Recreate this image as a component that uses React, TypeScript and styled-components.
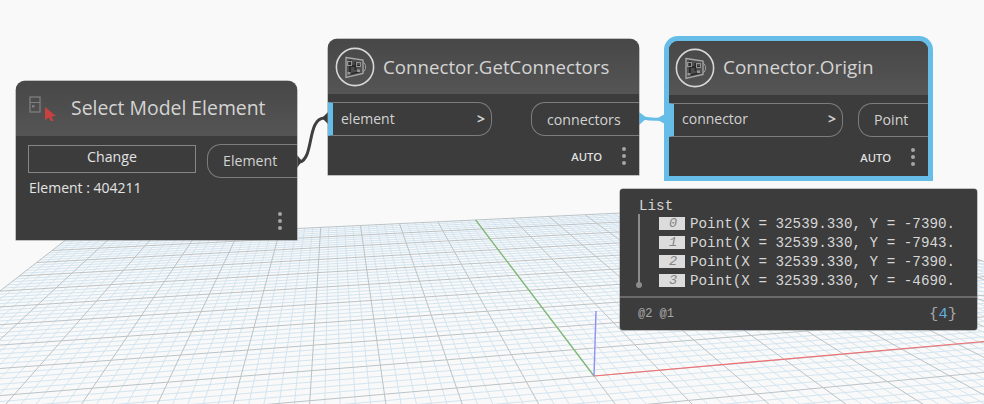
import React, { useMemo } from 'react';
import styled, { createGlobalStyle } from 'styled-components';

const GlobalStyle = createGlobalStyle`
  html, body {
    margin: 0;
    padding: 0;
    background: #f9f9f9;
    overflow: hidden;
  }
`;

const Canvas = styled.div`
  position: relative;
  width: 984px;
  height: 404px;
  overflow: hidden;
  background: #f9f9f9;
  font-family: "Open Sans", "Noto Sans", sans-serif;
`;

const Drawing = styled.svg`
  position: absolute;
  left: 0;
  top: 0;
`;

const Node = styled.div<{ $x: number; $y: number; $w: number; $h: number; $selected?: boolean }>`
  position: absolute;
  left: ${(p) => p.$x}px;
  top: ${(p) => p.$y}px;
  width: ${(p) => p.$w}px;
  height: ${(p) => p.$h}px;
  display: flex;
  flex-direction: column;
  background: #3c3c3c;
  border-radius: 9px 9px 0 0;
  overflow: hidden;
  box-shadow: ${(p) => (p.$selected ? '0 0 0 5px #66bde8' : '0 0 0 0.5px #8a8a8a')};
`;

const Header = styled.div<{ $h: number; $gap: number; $pad: number }>`
  flex: none;
  height: ${(p) => p.$h}px;
  display: flex;
  align-items: center;
  gap: ${(p) => p.$gap}px;
  padding-left: ${(p) => p.$pad}px;
  background: linear-gradient(#474747, #555555);
`;

const Title = styled.span<{ $size: number; $lift?: number }>`
  color: #d4d4d4;
  font-size: ${(p) => p.$size}px;
  line-height: 24px;
  padding-bottom: ${(p) => p.$lift ?? 0}px;
  white-space: nowrap;
`;

const Ports = styled.div`
  display: flex;
  justify-content: space-between;
  padding-top: 8px;
`;

const InPort = styled.div<{ $w: number; $lift: number }>`
  box-sizing: border-box;
  width: ${(p) => p.$w}px;
  height: 34px;
  display: flex;
  align-items: center;
  justify-content: space-between;
  padding: 0 6px ${(p) => p.$lift}px 8px;
  border: 1px solid #7d7d7d;
  border-left: 5px solid #66bde8;
  border-radius: 0 14px 14px 0;
  color: #d2d2d2;
  font-size: 14px;
`;

const OutPort = styled.div<{ $w: number; $lift?: number }>`
  box-sizing: border-box;
  width: ${(p) => p.$w}px;
  height: 34px;
  display: flex;
  align-items: center;
  padding-left: 15px;
  padding-bottom: ${(p) => p.$lift ?? 0}px;
  border: 1px solid #7d7d7d;
  border-right: none;
  border-radius: 14px 0 0 14px;
  color: #d2d2d2;
  font-size: 14.2px;
`;

const Arrow = styled.span`
  font-size: 14px;
  font-weight: 700;
  color: #cfcfcf;
`;

const Footer = styled.div<{ $right: number }>`
  margin-top: auto;
  height: 38px;
  display: flex;
  align-items: center;
  justify-content: flex-end;
  gap: 20px;
  padding-right: ${(p) => p.$right}px;
`;

const Auto = styled.span`
  color: #e4e4e4;
  font-family: "Noto Sans", sans-serif;
  font-size: 11.3px;
  font-weight: 500;
`;

const Dots = styled.div`
  display: flex;
  flex-direction: column;
  gap: 3px;
`;

const Dot = styled.i`
  display: block;
  width: 4px;
  height: 4px;
  border-radius: 50%;
  background: #a6a6a6;
`;

const SelectBody = styled.div`
  display: flex;
  justify-content: space-between;
  align-items: flex-start;
  padding: 8px 0 0 12px;
`;

const SelectColumn = styled.div`
  width: 168px;
  display: flex;
  flex-direction: column;
  gap: 4px;
  padding-top: 1px;
`;

const ChangeButton = styled.div`
  box-sizing: border-box;
  height: 28px;
  display: flex;
  align-items: center;
  justify-content: center;
  padding-bottom: 5px;
  border: 1px solid #868686;
  color: #e2e2e2;
  font-size: 14.2px;
`;

const ElementId = styled.div`
  padding-left: 1px;
  color: #e4e4e4;
  font-size: 14px;
  line-height: 22px;
`;

const Preview = styled.div`
  position: absolute;
  left: 620px;
  top: 189px;
  width: 357px;
  height: 141px;
  display: flex;
  flex-direction: column;
  border-radius: 3px;
  background: #3c3c3c;
  box-shadow: 0 0 0 0.5px #8a8a8a;
  font-family: "Liberation Mono", monospace;
`;

const PreviewList = styled.div`
  flex: none;
  height: 107px;
  box-sizing: border-box;
  padding: 9px 0 0 19px;
`;

const ListLabel = styled.div`
  color: #d6d6d6;
  font-size: 14.25px;
  line-height: 16px;
`;

const Rows = styled.div`
  position: relative;
  display: flex;
  flex-direction: column;
  padding: 0 0 0 20px;
`;

const Stem = styled.div`
  position: absolute;
  left: -1px;
  top: 0;
  width: 2px;
  height: 71px;
  background: #8c8c8c;
  &::after {
    content: '';
    position: absolute;
    left: -2px;
    bottom: -3px;
    width: 6px;
    height: 6px;
    border-radius: 50%;
    background: #8c8c8c;
  }
`;

const Row = styled.div`
  height: 19px;
  display: flex;
  align-items: center;
  gap: 5px;
`;

const Index = styled.span`
  box-sizing: border-box;
  width: 26px;
  height: 13px;
  padding-right: 8px;
  background: #dcdcdc;
  color: #858585;
  font-size: 13.5px;
  font-style: italic;
  line-height: 13px;
  text-align: right;
`;

const Value = styled.span`
  color: #d6d6d6;
  font-size: 14.25px;
  white-space: nowrap;
`;

const PreviewFooter = styled.div`
  flex: 1;
  display: flex;
  align-items: center;
  justify-content: space-between;
  padding: 0 20px 0 18px;
  border-top: 2px solid #6a6a6a;
`;

const Levels = styled.span`
  color: #a8a8a8;
  font-size: 12px;
`;

const Count = styled.span`
  color: #a8a8a8;
  font-size: 15.5px;
  b {
    color: #5fb0e0;
    font-weight: normal;
  }
`;

// ground plane homography: origin plus the two vanishing points
const O = [594, 376];
const VP_U = [4750, 15];
const VP_V = [333, 32];
const A = 0.016;
const B = 0.083;

const project = (u: number, v: number) => {
  const w = A * u + B * v + 1;
  return [
    (A * VP_U[0] * u + B * VP_V[0] * v + O[0]) / w,
    (A * VP_U[1] * u + B * VP_V[1] * v + O[1]) / w,
  ];
};

const segment = (u1: number, v1: number, u2: number, v2: number) => {
  const a = project(u1, v1);
  const b = project(u2, v2);
  return `M${a[0].toFixed(1)} ${a[1].toFixed(1)}L${b[0].toFixed(1)} ${b[1].toFixed(1)}`;
};

const UMIN = -10;
const UMAX = 10;
const VMIN = -5;
const VMAX = 10;

const Ground = () => {
  const [minor, major] = useMemo(() => {
    let mn = '';
    let mj = '';
    for (let i = UMIN * 5; i <= UMAX * 5; i++) {
      const d = segment(i / 5, VMIN, i / 5, VMAX);
      if (i % 5 === 0) mj += d;
      else mn += d;
    }
    for (let i = VMIN * 5; i <= VMAX * 5; i++) {
      const d = segment(UMIN, i / 5, UMAX, i / 5);
      if (i % 5 === 0) mj += d;
      else mn += d;
    }
    return [mn, mj];
  }, []);
  const origin = project(0, 0);
  const far = project(0, VMAX);
  return (
    <Drawing width={984} height={404}>
      <path d={minor} stroke="#cfe2ee" strokeWidth={0.9} fill="none" />
      <path d={major} stroke="#bac3c7" strokeWidth={1} fill="none" />
      <path d={`M${origin[0]} ${origin[1]}L${far[0]} ${far[1]}`} stroke="#7fb876" strokeWidth={1.3} />
      <path d={`M${origin[0]} ${origin[1]}L984 341.5`} stroke="#f07074" strokeWidth={1.2} />
      <path d={`M${origin[0]} ${origin[1]}L596 311`} stroke="#8f8ff2" strokeWidth={1.4} />
    </Drawing>
  );
};

const Wires = () => (
  <Drawing width={984} height={404}>
    <path d="M297 155L302 161L297 168Z" fill="#3c3c3c" />
    <path d="M300 162C314 158 307 119 324 118" stroke="#3f3f3f" strokeWidth={3} fill="none" />
    <path d="M328 112L322 118L328 124Z" fill="#3c3c3c" />
    <path d="M639 112L647 118L639 125Z" fill="#66bde8" />
    <path d="M643 118C652 120 656 119 665 119" stroke="#66bde8" strokeWidth={3} fill="none" />
    <path d="M656 119L665 114V124Z" fill="#66bde8" />
  </Drawing>
);

const ConnectorIcon = () => (
  <svg width={40} height={40} viewBox="0 0 40 40" fill="none">
    <circle cx={20} cy={20} r={18.6} stroke="#d8d8d8" strokeWidth={1.6} />
    <path d="M11 10.5L28 13V26.5L11 30.5Z" stroke="#a8a8a8" strokeWidth={1.3} />
    <path d="M28 15C31.5 17 31.5 23 28 25" stroke="#a0a0a0" strokeWidth={1} />
    <path d="M15 13V27M15 19H25M20.5 15V23M14 27.5L25 24.5" stroke="#2a2a2a" strokeWidth={1.8} />
    <rect x={12.5} y={14.5} width={4} height={4} stroke="#949494" />
    <rect x={21.5} y={15.5} width={4} height={4} stroke="#949494" />
    <rect x={12.5} y={25} width={3} height={2.5} fill="#949494" />
    <rect x={22} y={22.5} width={3} height={2.5} fill="#949494" />
  </svg>
);

const SelectIcon = () => (
  <svg width={30} height={26} viewBox="0 0 30 26" fill="none">
    <rect x={1} y={1} width={10} height={15} stroke="#7e7e7e" strokeWidth={1.3} />
    <path d="M1 6.5H11" stroke="#7e7e7e" strokeWidth={1.2} />
    <rect x={3} y={9} width={2.5} height={2.5} fill="#7e7e7e" />
    <path d="M16 11L27 20L22.5 20.5L24.5 25L21.5 25L20 21.5L16 24Z" fill="#c8403f" />
  </svg>
);

const MoreDots = () => (
  <Dots>
    <Dot />
    <Dot />
    <Dot />
  </Dots>
);

const listRows = [
  ['0', 'Point(X = 32539.330, Y = -7390.'],
  ['1', 'Point(X = 32539.330, Y = -7943.'],
  ['2', 'Point(X = 32539.330, Y = -7390.'],
  ['3', 'Point(X = 32539.330, Y = -4690.'],
];

const App = () => {
  return (
    <Canvas>
      <GlobalStyle />
      <Ground />
      <Wires />

      <Node $x={16} $y={81} $w={281} $h={159}>
        <Header $h={55} $gap={12} $pad={13}>
          <SelectIcon />
          <Title $size={19.4} $lift={2}>Select Model Element</Title>
        </Header>
        <SelectBody>
          <SelectColumn>
            <ChangeButton>Change</ChangeButton>
            <ElementId>Element : 404211</ElementId>
          </SelectColumn>
          <OutPort $w={90} $lift={2}>Element</OutPort>
        </SelectBody>
        <Footer $right={15}>
          <MoreDots />
        </Footer>
      </Node>

      <Node $x={328} $y={39} $w={311} $h={136}>
        <Header $h={55} $gap={8} $pad={7}>
          <ConnectorIcon />
          <Title $size={18.7}>Connector.GetConnectors</Title>
        </Header>
        <Ports>
          <InPort $w={164} $lift={2}>
            element
            <Arrow>&gt;</Arrow>
          </InPort>
          <OutPort $w={108}>connectors</OutPort>
        </Ports>
        <Footer $right={13}>
          <Auto>AUTO</Auto>
          <MoreDots />
        </Footer>
      </Node>

      <Node $x={669} $y={41} $w={259} $h={135} $selected>
        <Header $h={54} $gap={8} $pad={6}>
          <ConnectorIcon />
          <Title $size={18.9} $lift={2}>Connector.Origin</Title>
        </Header>
        <Ports>
          <InPort $w={174} $lift={4}>
            connector
            <Arrow>&gt;</Arrow>
          </InPort>
          <OutPort $w={70} $lift={2}>Point</OutPort>
        </Ports>
        <Footer $right={13}>
          <Auto>AUTO</Auto>
          <MoreDots />
        </Footer>
      </Node>

      <Preview>
        <PreviewList>
          <ListLabel>List</ListLabel>
          <Rows>
            <Stem />
            {listRows.map(([index, value]) => (
              <Row key={index}>
                <Index>{index}</Index>
                <Value>{value}</Value>
              </Row>
            ))}
          </Rows>
        </PreviewList>
        <PreviewFooter>
          <Levels>@2 @1</Levels>
          <Count>
            {'{'}
            <b>4</b>
            {'}'}
          </Count>
        </PreviewFooter>
      </Preview>
    </Canvas>
  );
};

export default App;
